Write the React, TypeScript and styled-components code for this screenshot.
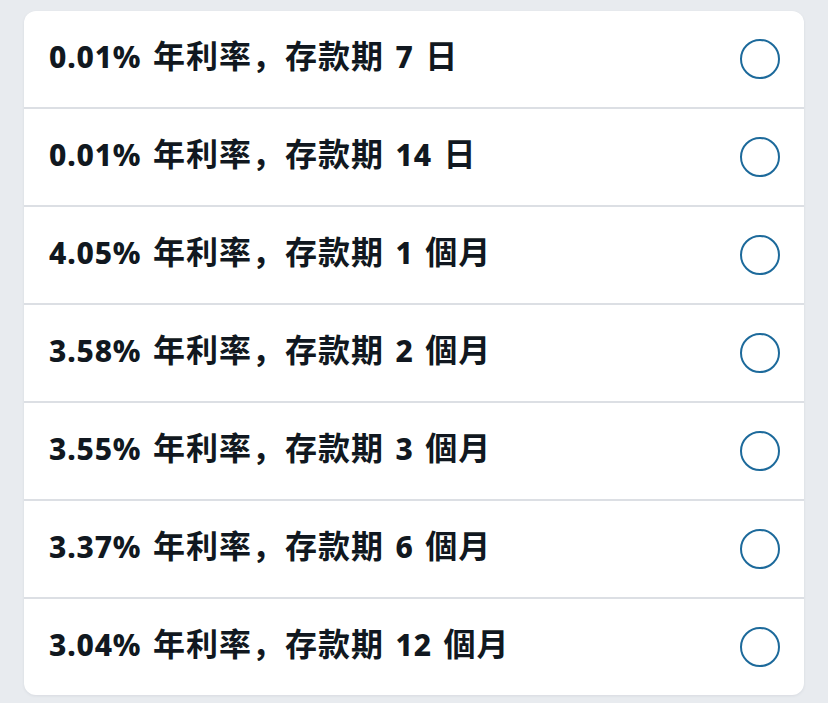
import * as React from 'react';
import styled, { createGlobalStyle } from 'styled-components';

const GlobalStyle = createGlobalStyle`
  html, body {
    margin: 0;
    padding: 0;
    background: #e8ebef;
  }
`;

const Page = styled.div`
  box-sizing: border-box;
  padding: 11px 24px 9px 24px;
  width: 828px;
  height: 703px;
`;

const Card = styled.div`
  background: #ffffff;
  border-radius: 12px;
  box-shadow: 0 1px 3px rgba(30, 40, 60, 0.08);
  display: flex;
  flex-flow: column nowrap;
  overflow: hidden;
`;

const Row = styled.label`
  align-items: center;
  border-top: 2px solid #dcdfe4;
  box-sizing: border-box;
  cursor: pointer;
  display: flex;
  height: 98px;
  justify-content: space-between;
  padding: 0 24px 0 25px;

  &:first-child {
    border-top: 0;
    height: 96px;
  }
`;

const Label = styled.span`
  color: #111820;
  font-family: 'Noto Sans', 'Noto Sans CJK SC', sans-serif;
  font-size: 30px;
  font-weight: 800;
  letter-spacing: 0.8px;
  line-height: 40px;
  margin-top: -6px;
  white-space: pre;
  word-spacing: 3px;
`;

const Han = styled.span`
  font-size: 32px;
  font-weight: 700;
  letter-spacing: 1px;
`;

const Radio = styled.span<{ checked?: boolean }>`
  border: 2px solid #1d6a9b;
  border-radius: 50%;
  box-sizing: border-box;
  height: 40px;
  width: 40px;
  background: ${({ checked }) => (checked ? '#1d6a9b' : 'transparent')};
`;

const options = [
  { rate: '0.01%', term: '7', unit: '日' },
  { rate: '0.01%', term: '14', unit: '日' },
  { rate: '4.05%', term: '1', unit: '個月' },
  { rate: '3.58%', term: '2', unit: '個月' },
  { rate: '3.55%', term: '3', unit: '個月' },
  { rate: '3.37%', term: '6', unit: '個月' },
  { rate: '3.04%', term: '12', unit: '個月' },
];

export default function App() {
  const [selected, setSelected] = React.useState<number | null>(null);
  return (
    <>
      <GlobalStyle />
      <Page>
        <Card>
          {options.map((o, i) => (
            <Row key={o.term + o.unit} onClick={() => setSelected(i)}>
              <Label>
                {o.rate} <Han>年利率，存款期</Han> {o.term} <Han>{o.unit}</Han>
              </Label>
              <Radio checked={selected === i} />
            </Row>
          ))}
        </Card>
      </Page>
    </>
  );
}
